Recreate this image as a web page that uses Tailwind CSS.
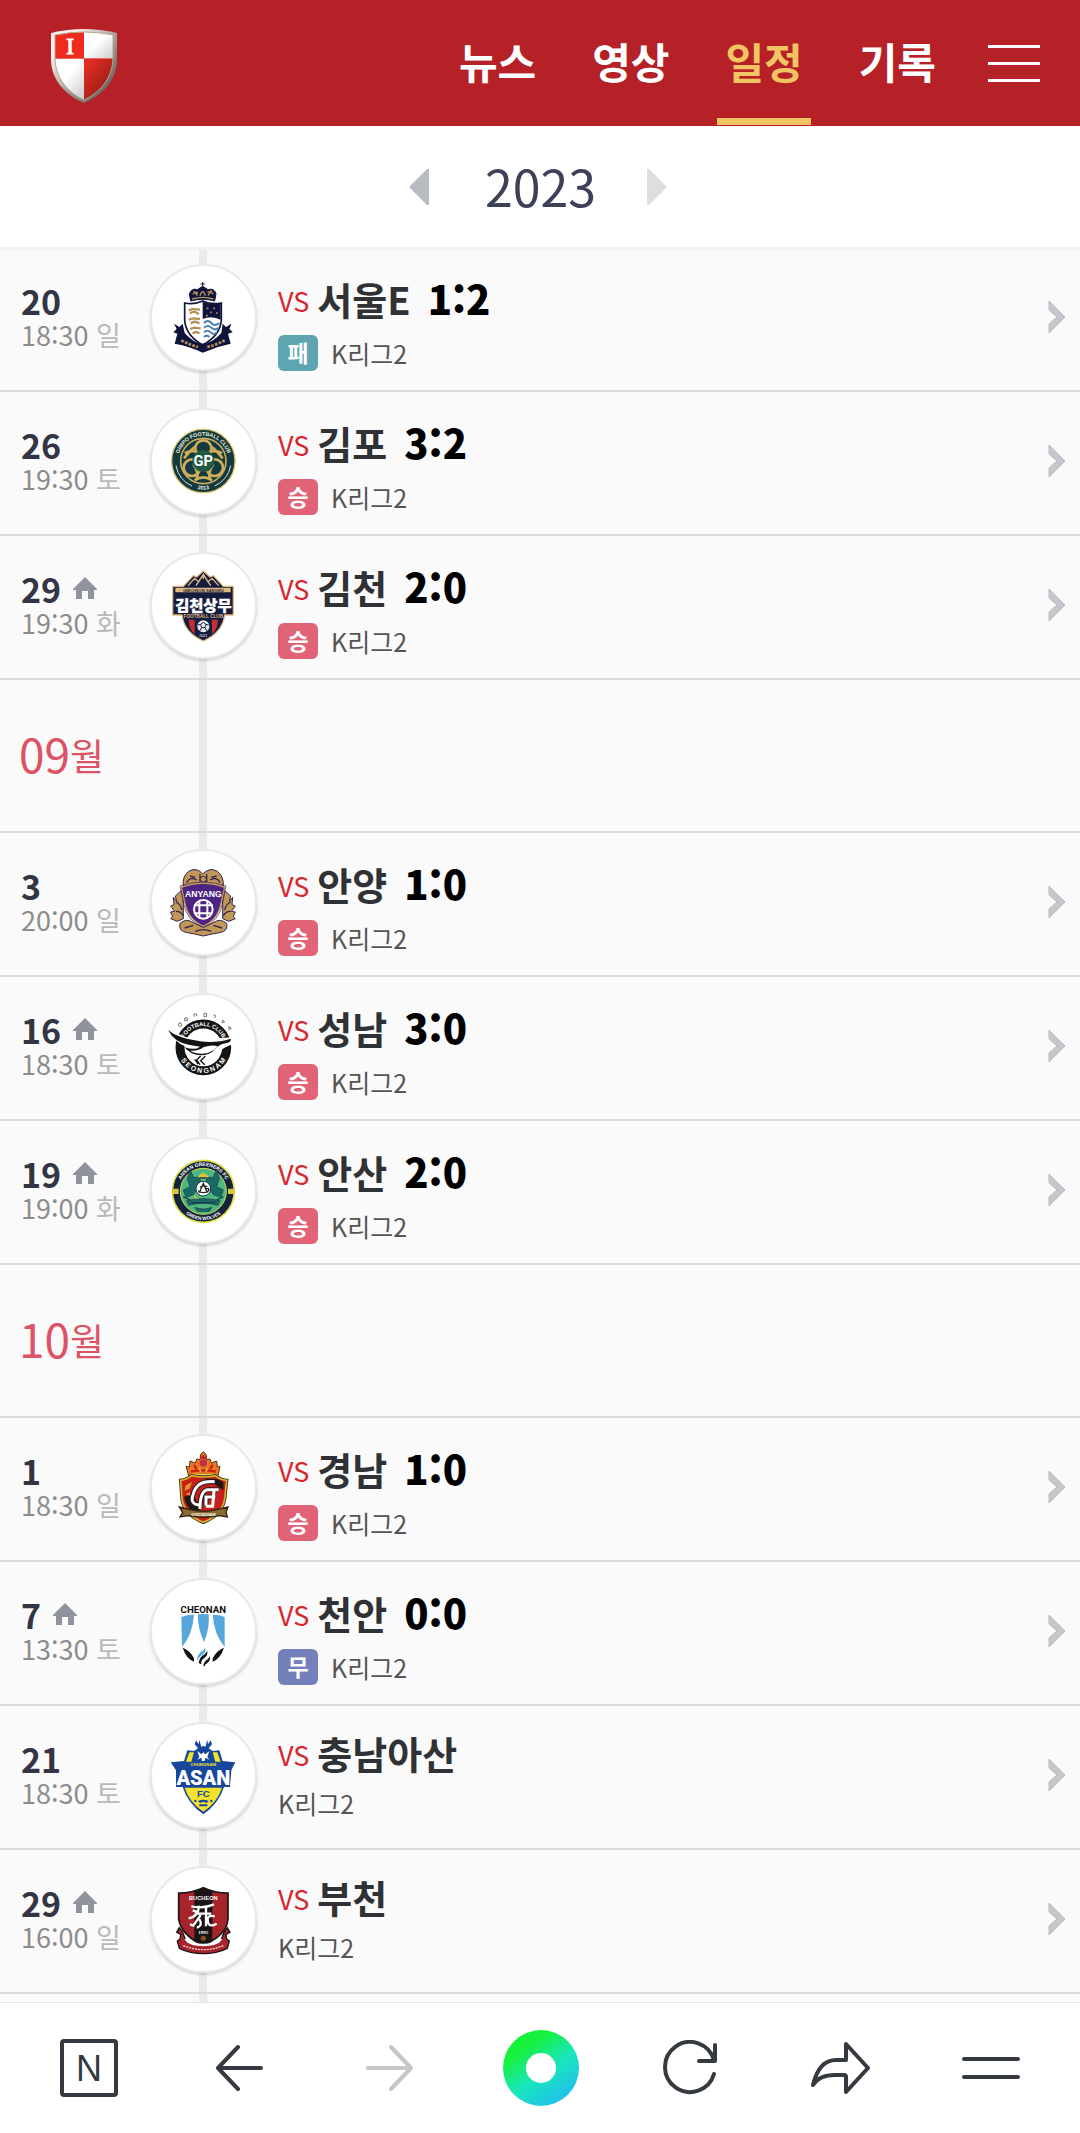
<!DOCTYPE html>
<html lang="ko">
<head>
    <meta charset="UTF-8">
    <meta name="viewport" content="width=device-width, initial-scale=1.0">
    <title>일정 - 2023</title>
    <script src="https://cdn.jsdelivr.net/npm/@tailwindcss/browser@4"></script>
</head>
<body class="bg-[#fafafa] font-['Noto_Sans_CJK_KR','Noto_Sans',sans-serif]">

    <!-- Shared icons -->
    <svg class="hidden">
        <symbol id="home" viewBox="0 0 24 22"><path fill="#8e939d" d="M12 0 24 12v1h-3v9h-6v-8H9v8H3v-9H0v-1z"/></symbol>
        <symbol id="chevron" viewBox="0 0 18 34"><path fill="#c6c7cc" stroke="#b9babf" stroke-width="1" d="M1 1 17 17 1 33V24L9 17 1 10z"/></symbol>
    </svg>

    <div class="flex min-h-screen flex-col">
        <header class="flex h-[126px] items-stretch bg-[#b52127] pr-10 pl-[51px]">
            <a href="#" class="mt-[29px]" aria-label="홈">
                <svg class="h-[74px] w-[66px]" viewBox="0 0 66 74">
                    <defs>
                        <linearGradient id="silver" x1="0" y1="0" x2="1" y2="1"><stop offset=".45" stop-color="#fff"/><stop offset="1" stop-color="#c4c5c7"/></linearGradient>
                        <linearGradient id="rim" x1="0" y1="0" x2="1" y2="1"><stop offset=".2" stop-color="#f7efee"/><stop offset=".6" stop-color="#98908c"/><stop offset="1" stop-color="#4f4746"/></linearGradient>
                        <linearGradient id="darkred" x1="0" y1="0" x2="1" y2="1"><stop offset=".1" stop-color="#e42c22"/><stop offset=".8" stop-color="#8d1b15"/></linearGradient>
                        <clipPath id="shield"><path d="M4 6Q33 0 62 6V28C62 50 48 64 33 71 18 64 4 50 4 28z"/></clipPath>
                    </defs>
                    <path fill="url(#rim)" d="M0 4Q33-4 66 4V30C66 52 50 67 33 74 16 67 0 52 0 30z"/>
                    <g clip-path="url(#shield)">
                        <path fill="#ef2b20" d="M0 0h33v29H0z"/>
                        <path fill="url(#silver)" d="M33 0h33v29H33z"/>
                        <path fill="url(#silver)" d="M0 30h33v44H0z"/>
                        <path fill="url(#darkred)" d="M33 30h33v44H33z"/>
                        <path stroke="#ef6a60" d="M0 29.500h66"/>
                    </g>
                    <path fill="none" stroke="#b8a98a" d="M4 6Q33 0 62 6V28C62 50 48 64 33 71 18 64 4 50 4 28z"/>
                    <text x="19" y="25" text-anchor="middle" font-family="Liberation Serif" font-size="23" fill="#fff" stroke="#fff">I</text>
                </svg>
            </a>
            <nav class="ml-auto flex gap-10 text-[42px] leading-[115px] font-bold text-white">
                <a href="#" class="px-2 pt-[3px]">뉴스</a>
                <a href="#" class="px-2 pt-[3px]">영상</a>
                <a href="#" class="mb-px border-b-[7px] border-[#f2c463] px-2 pt-[3px] text-[#f2c463]" aria-current="page">일정</a>
                <a href="#" class="px-2 pt-[3px]">기록</a>
            </nav>
            <button type="button" class="ml-11" aria-label="메뉴">
                <svg class="h-[37px] w-[52px]" viewBox="0 0 52 37"><path stroke="#fff" stroke-width="3" d="M0 1.500h52M0 18.500h52M0 35.500h52"/></svg>
            </button>
        </header>

        <!-- Year -->
        <div class="relative z-10 flex h-[124px] items-center justify-center gap-[51px] border-b-[3px] border-[#f2f2f2] bg-white pt-px pr-1">
            <button type="button" aria-label="이전 연도"><svg class="h-9 w-5" viewBox="0 0 20 36"><path fill="#b9bbc2" d="M20 0v36h-2L1 19q-1-1 0-2L18 0z"/></svg></button>
            <h1 class="pb-1 pl-[5px] text-[50px] leading-[60px] text-[#3c4158]">2023</h1>
            <button type="button" aria-label="다음 연도"><svg class="h-9 w-5" viewBox="0 0 20 36"><path fill="#dedede" d="M0 0v36h2l17-17q1-1 0-2L2 0z"/></svg></button>
        </div>

        <main class="relative -mt-0.5 grow">
            <div class="absolute inset-y-0 left-[199px] w-2 bg-[#ebebeb]"></div>
            <ul class="relative">
                <li>
                    <a href="#" class="flex h-36 items-center border-b-2 border-[#dbdbdb] pr-3.5 pb-1 pl-[21px]">
                        <div class="w-[129px]">
                            <p class="text-[34px] leading-[35px] font-bold text-[#333544]">20</p>
                            <p class="text-[27px] leading-[34px] text-[#8c8c8c]">18:30 <span class="text-[#b9b9b9]">일</span></p>
                        </div>
                        <div class="flex size-[107px] items-center justify-center rounded-full border-2 border-[#e9e9e9] bg-white shadow-[0_2px_3px_#00000026]">
                            <svg class="size-20" viewBox="-118 -120 240 240">
                                <path fill="#11143a" stroke="#11143a" stroke-width="3" d="M-2-105v14M-8-99H4M-38-48-42-70Q-34-88-18-82L-2-92 14-82Q32-88 38-70L34-48Q-2-58-38-48z"/>
                                <path fill="none" stroke="#b4925a" stroke-width="4" d="M-34-54Q-2-64 30-54M-32-68q8-10 14 4M-10-64q8-24 16 0M14-64q8-16 16-4M-30-76l14 4M12-74l14-4"/>
                                <path fill="#fff" stroke="#11143a" stroke-width="5" d="M-56-42Q-28-36-2-48 24-36 54-42V10Q50 56-2 84-52 56-56 10z"/>
                                <path fill="#11143a" d="M-2-46Q24-36 52-40V8Q24-6-2 6z"/>
                                <path fill="none" stroke="#b4925a" stroke-width="7" d="M-44-20l12-4 22 2M-40-10q12-12 26 2M-44 8l12-4 22 2M-38 20q12-12 26 0M-40 36l12-4 20 2M-32 50q10-10 20 0"/>
                                <path stroke="#b4925a" stroke-width="5" d="M10-26h5M30-26h5M20-14h5M38-12h5M8-4h5"/>
                                <path fill="none" stroke="#4f7fb4" stroke-width="6" d="M2 18q12-12 22 0t24 0M2 32q12-10 22 0t22 0M2 46q10-10 20 0t18 0M2 60q8-8 16 0"/>
                                <path fill="#11143a" d="M-88 20l16 10 10-10 6 28Q-30 78-2 80 28 78 54 48L58 20 68 30 84 20 78 36 88 46 74 50 82 80Q40 88-2 107-40 88-86 80L-78 50-90 46-80 36z"/>
                                <path fill="none" stroke="#b4925a" stroke-width="8" stroke-dasharray="8 4" d="M-66 70Q-40 84-16 90M12 90Q38 84 64 70"/>
                            </svg>
                        </div>
                        <div class="ml-[21px] self-start pt-[27px]">
                            <h3 class="text-[38px] leading-12 font-bold text-[#2f3134]"><span class="mr-2 align-[3px] text-[27px] leading-none font-normal text-[#d7262d]">VS</span>서울E<b class="ml-[17px] text-[40px] leading-none text-black">1:2</b></h3>
                            <p class="mt-3 flex items-center gap-[13px] text-[25px] leading-9 text-[#555]"><span class="h-9 w-10 rounded-md bg-[#5ea5b2] text-center text-[23px] leading-[34px] font-bold text-white">패</span>K리그2</p>
                        </div>
                        <svg class="ml-auto h-[34px] w-[18px]"><use href="#chevron"/></svg>
                    </a>
                </li>
                <li>
                    <a href="#" class="flex h-36 items-center border-b-2 border-[#dbdbdb] pr-3.5 pb-1 pl-[21px]">
                        <div class="w-[129px]">
                            <p class="text-[34px] leading-[35px] font-bold text-[#333544]">26</p>
                            <p class="text-[27px] leading-[34px] text-[#8c8c8c]">19:30 <span class="text-[#b9b9b9]">토</span></p>
                        </div>
                        <div class="flex size-[107px] items-center justify-center rounded-full border-2 border-[#e9e9e9] bg-white shadow-[0_2px_3px_#00000026]">
                            <svg class="size-20" viewBox="-118 -120 240 240">
                                <defs>
                                    <path id="ringTop" d="M-76 0A76 76 0 0 1 76 0"/>
                                    <path id="ringBottom" d="M-86 0A86 86 0 0 0 86 0"/>
                                </defs>
                                <circle r="95" fill="#123a40" stroke="#d8bd63" stroke-width="4"/>
                                <text font-family="Liberation Sans" font-weight="700" font-size="16" fill="#f3efdc" text-anchor="middle"><textPath href="#ringTop" startOffset="50%">GIMPO FOOTBALL CLUB</textPath></text>
                                <text font-family="Liberation Sans" font-weight="700" font-size="16" fill="#f3efdc" text-anchor="middle"><textPath href="#ringBottom" startOffset="50%">2013</textPath></text>
                                <path fill="none" stroke="#d9dfd8" stroke-width="3" d="M-82 14A84 84 0 0 0-34 75M82 14A84 84 0 0 1 34 75"/>
                                <circle r="68" fill="#123a40" stroke="#d0ad58" stroke-width="5"/>
                                <g fill="none" stroke="#d0ad58" stroke-width="8">
                                    <circle cy="-38" r="24"/><circle cx="-34" cy="20" r="25"/><circle cx="34" cy="20" r="25"/>
                                    <path d="M-56-24Q-20-40 0-12M56-24Q20-40 0-12M-22 56Q-10 40-30 10M22 56Q10 40 30 10M-58-8Q-40-30-26-42M58-8Q40-30 26-42M-26 58Q0 40 26 58"/>
                                </g>
                                <circle r="33" fill="#1f5b42"/>
                                <text y="15" text-anchor="middle" font-family="Roboto" font-weight="700" font-size="44" fill="#fff">GP</text>
                            </svg>
                        </div>
                        <div class="ml-[21px] self-start pt-[27px]">
                            <h3 class="text-[38px] leading-12 font-bold text-[#2f3134]"><span class="mr-2 align-[3px] text-[27px] leading-none font-normal text-[#d7262d]">VS</span>김포<b class="ml-[17px] text-[40px] leading-none text-black">3:2</b></h3>
                            <p class="mt-3 flex items-center gap-[13px] text-[25px] leading-9 text-[#555]"><span class="h-9 w-10 rounded-md bg-[#e06378] text-center text-[23px] leading-[34px] font-bold text-white">승</span>K리그2</p>
                        </div>
                        <svg class="ml-auto h-[34px] w-[18px]"><use href="#chevron"/></svg>
                    </a>
                </li>
                <li>
                    <a href="#" class="flex h-36 items-center border-b-2 border-[#dbdbdb] pr-3.5 pb-1 pl-[21px]">
                        <div class="w-[129px]">
                            <p class="flex items-center gap-3 text-[34px] leading-[35px] font-bold text-[#333544]">29 <svg class="h-[22px] w-6"><use href="#home"/></svg></p>
                            <p class="text-[27px] leading-[34px] text-[#8c8c8c]">19:30 <span class="text-[#b9b9b9]">화</span></p>
                        </div>
                        <div class="flex size-[107px] items-center justify-center rounded-full border-2 border-[#e9e9e9] bg-white shadow-[0_2px_3px_#00000026]">
                            <svg class="size-20" viewBox="-118 -120 240 240">
                                <path fill="#141d3f" stroke="#e0b981" stroke-width="4" stroke-linejoin="round" d="M-92-56H-60L-30-88-20-84 0-102 20-84 30-88 60-56H90V30H64Q58 82 0 108-58 82-64 30H-92z"/>
                                <path fill="none" stroke="#e0b981" stroke-width="4" d="M-46-58-26-80-14-70 0-92 14-70 26-80 46-58M-14-70-22-58M14-70 22-58M0-92V-78"/>
                                <path fill="#e0b981" d="M-84-52H82v14H-84z"/>
                                <text y="-40" text-anchor="middle" font-family="Liberation Sans" font-weight="700" font-size="12" fill="#141d3f">GIMCHEON SANGMU</text>
                                <text y="17" text-anchor="middle" font-family="Noto Sans CJK KR" font-weight="900" font-size="46" fill="#fff" stroke="#fff">김천상무</text>
                                <text y="39" text-anchor="middle" font-family="Liberation Sans" font-weight="700" font-size="14" fill="#e0b981">FOOTBALL CLUB</text>
                                <path fill="#c5302f" d="M-44 44h18v42Q-42 76-44 44zM44 44H26v42Q42 76 44 44z"/>
                                <circle cy="64" r="18" fill="#e8ebef"/>
                                <path fill="none" stroke="#141d3f" stroke-width="3" d="M-8 58 0 52l8 6-3 10H-5zM-16 60l8-2M16 60l-8-2M-5 68l-6 10M5 68l6 10"/>
                                <text y="96" text-anchor="middle" font-family="Liberation Sans" font-size="11" fill="#fff">2021</text>
                            </svg>
                        </div>
                        <div class="ml-[21px] self-start pt-[27px]">
                            <h3 class="text-[38px] leading-12 font-bold text-[#2f3134]"><span class="mr-2 align-[3px] text-[27px] leading-none font-normal text-[#d7262d]">VS</span>김천<b class="ml-[17px] text-[40px] leading-none text-black">2:0</b></h3>
                            <p class="mt-3 flex items-center gap-[13px] text-[25px] leading-9 text-[#555]"><span class="h-9 w-10 rounded-md bg-[#e06378] text-center text-[23px] leading-[34px] font-bold text-white">승</span>K리그2</p>
                        </div>
                        <svg class="ml-auto h-[34px] w-[18px]"><use href="#chevron"/></svg>
                    </a>
                </li>

                <li class="flex h-[153px] items-center border-b-2 border-[#dbdbdb] pb-1.5 pl-[19px]">
                    <h2 class="text-[46px] leading-[60px] text-[#dc5365]">09<span class="align-[2px] text-[37px] leading-none">월</span></h2>
                </li>
                <li>
                    <a href="#" class="flex h-36 items-center border-b-2 border-[#dbdbdb] pr-3.5 pb-1 pl-[21px]">
                        <div class="w-[129px]">
                            <p class="text-[34px] leading-[35px] font-bold text-[#333544]">3</p>
                            <p class="text-[27px] leading-[34px] text-[#8c8c8c]">20:00 <span class="text-[#b9b9b9]">일</span></p>
                        </div>
                        <div class="flex size-[107px] items-center justify-center rounded-full border-2 border-[#e9e9e9] bg-white shadow-[0_2px_3px_#00000026]">
                            <svg class="size-20" viewBox="-118 -120 240 240">
                                <g fill="#c1975a" stroke="#33264d" stroke-width="3" stroke-linejoin="round">
                                    <path d="M-60-48Q-64-76-44-92-20-106-2-84 20-106 42-92 62-76 60-48L0-40z"/>
                                    <path d="M-66-34-84-18-80-2-90-14-88 8-98 12-86 28-98 30-92 44-98 50-78 58-60 50V-10zM64-34 82-18 78-2 88-14 86 8 96 12 84 28 96 30 90 44 96 50 76 58 58 50V-10z"/>
                                    <path d="M-70 64Q-50 48-34 60L0 76 34 60Q50 48 70 64 76 88 48 92L26 96 0 102-26 96-48 92Q-76 88-70 64z"/>
                                </g>
                                <path fill="none" stroke="#33264d" stroke-width="4" d="M-50-58q10-20 30-8M50-58q-10-20-30-8M-40-78l16 4M40-78l-16 4M-10-84V-60M10-84V-60M-82 0q14 6 18 24M-82 28q16 0 22 14M82 0q-14 6-18 24M82 28q-16 0-22 14M-56 78l26-8M-24 88q24-10 48 0M56 78 30 70"/>
                                <circle cy="-68" r="9" fill="#c1975a" stroke="#33264d" stroke-width="3"/>
                                <path fill="#4d2384" stroke="#c1975a" stroke-width="4" d="M-66-44Q0-68 64-44L54 0Q44 54 0 72-46 54-56 0z"/>
                                <path fill="none" stroke="#33264d" stroke-width="2" d="M-70-48Q0-72 68-48L58 2Q48 58 0 76-50 58-60 2z"/>
                                <text y="-16" text-anchor="middle" font-family="Liberation Sans" font-weight="700" font-size="26" fill="#fff">ANYANG</text>
                                <g fill="none" stroke="#fff" stroke-width="6"><circle cy="22" r="28"/><path d="M-12 10H12V34H-12zM-12-4V10M12-4V10M-12 34V48M12 34V48M-28 10H-12M28 10H12M-28 34H-12M28 34H12"/></g>
                            </svg>
                        </div>
                        <div class="ml-[21px] self-start pt-[27px]">
                            <h3 class="text-[38px] leading-12 font-bold text-[#2f3134]"><span class="mr-2 align-[3px] text-[27px] leading-none font-normal text-[#d7262d]">VS</span>안양<b class="ml-[17px] text-[40px] leading-none text-black">1:0</b></h3>
                            <p class="mt-3 flex items-center gap-[13px] text-[25px] leading-9 text-[#555]"><span class="h-9 w-10 rounded-md bg-[#e06378] text-center text-[23px] leading-[34px] font-bold text-white">승</span>K리그2</p>
                        </div>
                        <svg class="ml-auto h-[34px] w-[18px]"><use href="#chevron"/></svg>
                    </a>
                </li>
                <li>
                    <a href="#" class="flex h-36 items-center border-b-2 border-[#dbdbdb] pr-3.5 pb-1 pl-[21px]">
                        <div class="w-[129px]">
                            <p class="flex items-center gap-3 text-[34px] leading-[35px] font-bold text-[#333544]">16 <svg class="h-[22px] w-6"><use href="#home"/></svg></p>
                            <p class="text-[27px] leading-[34px] text-[#8c8c8c]">18:30 <span class="text-[#b9b9b9]">토</span></p>
                        </div>
                        <div class="flex size-[107px] items-center justify-center rounded-full border-2 border-[#e9e9e9] bg-white shadow-[0_2px_3px_#00000026]">
                            <svg class="size-20" viewBox="-118 -120 240 240">
                                <defs>
                                    <path id="snTop" d="M-64 4A64 64 0 0 1 64 4"/>
                                    <path id="snBottom" d="M-77 4A77 77 0 0 0 77 4"/>
                                </defs>
                                <g fill="none" stroke="#777" stroke-width="3"><path d="M-76-66l8-4 4 8-8 4zM-56-84h8v8h-8zM-28-88v-8h8v6M2-98h8v10H2zM30-94l8 4-6 6M58-78l6 6-8 2zM76-58l8 4-6 6z"/></g>
                                <circle cy="4" r="70" fill="none" stroke="#141414" stroke-width="27"/>
                                <text font-family="Liberation Sans" font-weight="700" font-size="17" fill="#fff" text-anchor="middle"><textPath href="#snTop" startOffset="50%">FOOTBALL CLUB</textPath></text>
                                <text font-family="Liberation Sans" font-weight="700" font-size="21" fill="#fff" text-anchor="middle"><textPath href="#snBottom" startOffset="50%">S E O N G N A M</textPath></text>
                                <path fill="#fff" d="M-104-50Q-84-38-60-30L-28-18 84-26V-4Q60 4 50 16L-56 0Q-86-10-104-50z"/>
                                <path fill="#141414" d="M-106-48Q-84-30-50-22L-10-14Q40-8 82-22 86-12 66-8 46-4 34 10 22 28-10 28-40 26-56 4-24 14-10 2L-44-4Q-86-10-106-48z"/>
                                <path fill="#fff" d="M0 4Q22-4 42 0 32 16 10 22-20 26-40 14-14 16 0 4z"/>
                                <path fill="none" stroke="#141414" stroke-width="4" d="M-8 30-20 42-10 56M6 30-8 44 4 56M-26 40l10 14"/>
                            </svg>
                        </div>
                        <div class="ml-[21px] self-start pt-[27px]">
                            <h3 class="text-[38px] leading-12 font-bold text-[#2f3134]"><span class="mr-2 align-[3px] text-[27px] leading-none font-normal text-[#d7262d]">VS</span>성남<b class="ml-[17px] text-[40px] leading-none text-black">3:0</b></h3>
                            <p class="mt-3 flex items-center gap-[13px] text-[25px] leading-9 text-[#555]"><span class="h-9 w-10 rounded-md bg-[#e06378] text-center text-[23px] leading-[34px] font-bold text-white">승</span>K리그2</p>
                        </div>
                        <svg class="ml-auto h-[34px] w-[18px]"><use href="#chevron"/></svg>
                    </a>
                </li>
                <li>
                    <a href="#" class="flex h-36 items-center border-b-2 border-[#dbdbdb] pr-3.5 pb-1 pl-[21px]">
                        <div class="w-[129px]">
                            <p class="flex items-center gap-3 text-[34px] leading-[35px] font-bold text-[#333544]">19 <svg class="h-[22px] w-6"><use href="#home"/></svg></p>
                            <p class="text-[27px] leading-[34px] text-[#8c8c8c]">19:00 <span class="text-[#b9b9b9]">화</span></p>
                        </div>
                        <div class="flex size-[107px] items-center justify-center rounded-full border-2 border-[#e9e9e9] bg-white shadow-[0_2px_3px_#00000026]">
                            <svg class="size-20" viewBox="-118 -120 240 240">
                                <circle cy="4" r="93" fill="#13223d" stroke="#dfe04a" stroke-width="5"/>
                                <g transform="translate(0 4)">
                                    <text font-family="Liberation Sans" font-weight="700" font-size="15" fill="#fff" text-anchor="middle"><textPath href="#ringTop" startOffset="50%">ANSAN GREENERS FC</textPath></text>
                                    <text font-family="Liberation Sans" font-weight="700" font-size="14" fill="#fff" text-anchor="middle"><textPath href="#ringBottom" startOffset="50%">GREEN WOLVES</textPath></text>
                                </g>
                                <circle cy="4" r="69" fill="#4fb780" stroke="#d6dc4b" stroke-width="3"/>
                                <path fill="#d8c43d" d="M-94-4h20v16h-20zM74-4h20v16H74zM-16-40Q0-62 16-40L12-32h-24zM-44-34l8-10 6 12zM-30 14l20 16-10 8zM30-30l12-6-2 12z"/>
                                <path fill="#1b6a63" stroke="#173a4c" stroke-width="2" d="M-40-62-28-36Q-14-44-8-28L-20 0-30 14-52 22-60 0-40-10-48-34zM40-62 28-36Q14-44 8-28L20 0 30 14 52 22 60 0 40-10 48-34zM-50 32Q0 20 50 32L44 46Q0 34-44 46zM-26 52Q0 62 26 52L18 64H-18z"/>
                                <path fill="none" stroke="#173a4c" stroke-width="4" d="M-60 20l20 10M60 20 40 30M-12-36h24M-36 38h72"/>
                                <circle cy="-4" r="22" fill="#fff" stroke="#173a4c" stroke-width="3"/>
                                <path fill="none" stroke="#222" stroke-width="4" d="M-12 8 0-20 12 8M-10-8Q0-16 12-10M-16 2Q0 14 16 2V-4H4"/>
                            </svg>
                        </div>
                        <div class="ml-[21px] self-start pt-[27px]">
                            <h3 class="text-[38px] leading-12 font-bold text-[#2f3134]"><span class="mr-2 align-[3px] text-[27px] leading-none font-normal text-[#d7262d]">VS</span>안산<b class="ml-[17px] text-[40px] leading-none text-black">2:0</b></h3>
                            <p class="mt-3 flex items-center gap-[13px] text-[25px] leading-9 text-[#555]"><span class="h-9 w-10 rounded-md bg-[#e06378] text-center text-[23px] leading-[34px] font-bold text-white">승</span>K리그2</p>
                        </div>
                        <svg class="ml-auto h-[34px] w-[18px]"><use href="#chevron"/></svg>
                    </a>
                </li>

                <li class="flex h-[153px] items-center border-b-2 border-[#dbdbdb] pb-1.5 pl-[19px]">
                    <h2 class="text-[46px] leading-[60px] text-[#dc5365]">10<span class="align-[2px] text-[37px] leading-none">월</span></h2>
                </li>
                <li>
                    <a href="#" class="flex h-36 items-center border-b-2 border-[#dbdbdb] pr-3.5 pb-1 pl-[21px]">
                        <div class="w-[129px]">
                            <p class="text-[34px] leading-[35px] font-bold text-[#333544]">1</p>
                            <p class="text-[27px] leading-[34px] text-[#8c8c8c]">18:30 <span class="text-[#b9b9b9]">일</span></p>
                        </div>
                        <div class="flex size-[107px] items-center justify-center rounded-full border-2 border-[#e9e9e9] bg-white shadow-[0_2px_3px_#00000026]">
                            <svg class="size-20" viewBox="-118 -120 240 240">
                                <path fill="#e8781f" stroke="#5b3414" stroke-width="3" stroke-linejoin="round" d="M-44-34-52-62-42-60-40-78-24-72-20-84-10-82-8-98 0-106 8-98 10-82 20-84 24-72 40-78 42-60 50-62 44-34Q0-44-44-34z"/>
                                <path fill="none" stroke="#cb2017" stroke-width="7" d="M-38-46Q0-54 38-46M-28-66l8 12M28-66l-8 12M0-96v12M-10-88H10"/>
                                <circle cy="-72" r="11" fill="#c22d4e"/>
                                <path stroke="#f3d34a" stroke-width="4" d="M-40-38H40M-12-56l4 10M12-56l-4 10"/>
                                <path fill="#c7201a" stroke="#3c2a16" stroke-width="10" d="M-68-20Q-48-22-36-34 0-26 36-34 48-22 70-20L64 36Q56 84 0 106-56 84-64 36z"/>
                                <path fill="#c7201a" stroke="#d8b22f" stroke-width="5" d="M-68-20Q-48-22-36-34 0-26 36-34 48-22 70-20L64 36Q56 84 0 106-56 84-64 36z"/>
                                <path fill="#1d1718" d="M0-26Q24-24 42-24L60-14V10L34-8zM-58 30-30 20-10 70-30 76Q-54 54-58 30z"/>
                                <path fill="#e0922b" d="M-54-4l20-12-6 20-16 8zM-54 20l14-4v10z"/>
                                <path fill="none" stroke="#231a1a" stroke-width="15" d="M34-16Q-20-20-30 20-42 52-12 54M46 8H12Q-10 12-10 66M36 30H8V56"/>
                                <path fill="none" stroke="#fff" stroke-width="9" d="M34-16Q-20-20-30 20-42 52-12 54M46 8H12Q-10 12-10 66M36 30H8V56M32 10 28 58H8"/>
                                <path fill="#8c6b32" stroke="#2f2414" stroke-width="4" d="M-72 60-40 68Q0 78 40 68L74 60 68 76 72 90 46 86Q0 96-44 86L-70 90-62 76z"/>
                                <text y="86" text-anchor="middle" font-family="Liberation Sans" font-weight="700" font-size="11" fill="#fff">GYEONGNAM</text>
                            </svg>
                        </div>
                        <div class="ml-[21px] self-start pt-[27px]">
                            <h3 class="text-[38px] leading-12 font-bold text-[#2f3134]"><span class="mr-2 align-[3px] text-[27px] leading-none font-normal text-[#d7262d]">VS</span>경남<b class="ml-[17px] text-[40px] leading-none text-black">1:0</b></h3>
                            <p class="mt-3 flex items-center gap-[13px] text-[25px] leading-9 text-[#555]"><span class="h-9 w-10 rounded-md bg-[#e06378] text-center text-[23px] leading-[34px] font-bold text-white">승</span>K리그2</p>
                        </div>
                        <svg class="ml-auto h-[34px] w-[18px]"><use href="#chevron"/></svg>
                    </a>
                </li>
                <li>
                    <a href="#" class="flex h-36 items-center border-b-2 border-[#dbdbdb] pr-3.5 pb-1 pl-[21px]">
                        <div class="w-[129px]">
                            <p class="flex items-center gap-3 text-[34px] leading-[35px] font-bold text-[#333544]">7 <svg class="h-[22px] w-6"><use href="#home"/></svg></p>
                            <p class="text-[27px] leading-[34px] text-[#8c8c8c]">13:30 <span class="text-[#b9b9b9]">토</span></p>
                        </div>
                        <div class="flex size-[107px] items-center justify-center rounded-full border-2 border-[#e9e9e9] bg-white shadow-[0_2px_3px_#00000026]">
                            <svg class="size-20" viewBox="-118 -120 240 240">
                                <text y="-55" text-anchor="middle" font-family="Roboto" font-weight="700" font-size="29" fill="#111">CHEONAN</text>
                                <path fill="#56a8dc" d="M-66-42Q-46-50-28-49-32 10-64 48zM-16-50Q0-52 16-50 20-10 2 34-18-10-16-50zM28-49Q46-50 64-42V48Q32 10 28-49z"/>
                                <path fill="#56a8dc" d="M-18 92Q-22 70 0 58L6 50Q8 64-4 72-16 80-18 92z"/>
                                <path fill="#111" d="M-62 50Q-40 58-28 82V92Q-52 82-62 50zM62 50Q40 58 28 82V92Q52 82 62 50zM-14 96Q-12 78 4 70L12 60Q14 74 2 82-8 88-6 100zM0 104Q2 90 14 84L20 76Q22 90 12 96 4 100 4 106z"/>
                            </svg>
                        </div>
                        <div class="ml-[21px] self-start pt-[27px]">
                            <h3 class="text-[38px] leading-12 font-bold text-[#2f3134]"><span class="mr-2 align-[3px] text-[27px] leading-none font-normal text-[#d7262d]">VS</span>천안<b class="ml-[17px] text-[40px] leading-none text-black">0:0</b></h3>
                            <p class="mt-3 flex items-center gap-[13px] text-[25px] leading-9 text-[#555]"><span class="h-9 w-10 rounded-md bg-[#7480bb] text-center text-[23px] leading-[34px] font-bold text-white">무</span>K리그2</p>
                        </div>
                        <svg class="ml-auto h-[34px] w-[18px]"><use href="#chevron"/></svg>
                    </a>
                </li>
                <li>
                    <a href="#" class="flex h-36 items-center border-b-2 border-[#dbdbdb] pr-3.5 pb-1 pl-[21px]">
                        <div class="w-[129px]">
                            <p class="text-[34px] leading-[35px] font-bold text-[#333544]">21</p>
                            <p class="text-[27px] leading-[34px] text-[#8c8c8c]">18:30 <span class="text-[#b9b9b9]">토</span></p>
                        </div>
                        <div class="flex size-[107px] items-center justify-center rounded-full border-2 border-[#e9e9e9] bg-white shadow-[0_2px_3px_#00000026]">
                            <svg class="size-20" viewBox="-118 -120 240 240">
                                <path fill="#17479d" d="M-98-38-58-42-48-74-28-72-16-80-26-92-22-104-14-92-12-106-6-84 0-88 6-84 12-106 14-92 22-104 26-92 16-80 28-72 48-74 58-42 96-38 84-14 80 36H62Q46 86 0 118-46 86-62 36H-82V-14z"/>
                                <path fill="#f2e22b" d="M-42-68h14l-8 28h-16zM42-68H28l8 28h16zM-56 38H56Q42 82 0 110-42 82-56 38z"/>
                                <path fill="#fff" d="M-18-72-6-62 0-68 6-62 18-72 12-54 18-46 6-52 4-42H-4l-2-10-12 6 6-8z"/>
                                <text y="-26" text-anchor="middle" font-family="Liberation Sans" font-weight="700" font-size="13" fill="#f2e22b">CHUNGNAM</text>
                                <text y="31" text-anchor="middle" font-family="Roboto" font-weight="900" font-size="60" fill="#fff">ASAN</text>
                                <text y="66" text-anchor="middle" font-family="Liberation Sans" font-weight="700" font-size="29" fill="#17479d">FC</text>
                                <path fill="#17479d" d="M-28 76l6-2 2 6-6 2zM20 76l6-2 2 6-6 2zM-16 78Q0 70 16 78L10 84Q0 78-10 84zM-12 88H12V94H-12z"/>
                            </svg>
                        </div>
                        <div class="ml-[21px] self-start pt-[23px]">
                            <h3 class="text-[38px] leading-12 font-bold text-[#2f3134]"><span class="mr-2 align-[3px] text-[27px] leading-none font-normal text-[#d7262d]">VS</span>충남아산</h3>
                            <p class="mt-2 text-[25px] leading-9 text-[#555]">K리그2</p>
                        </div>
                        <svg class="ml-auto h-[34px] w-[18px]"><use href="#chevron"/></svg>
                    </a>
                </li>
                <li>
                    <a href="#" class="flex h-36 items-center border-b-2 border-[#dbdbdb] pr-3.5 pb-1 pl-[21px]">
                        <div class="w-[129px]">
                            <p class="flex items-center gap-3 text-[34px] leading-[35px] font-bold text-[#333544]">29 <svg class="h-[22px] w-6"><use href="#home"/></svg></p>
                            <p class="text-[27px] leading-[34px] text-[#8c8c8c]">16:00 <span class="text-[#b9b9b9]">일</span></p>
                        </div>
                        <div class="flex size-[107px] items-center justify-center rounded-full border-2 border-[#e9e9e9] bg-white shadow-[0_2px_3px_#00000026]">
                            <svg class="size-20" viewBox="-118 -120 240 240">
                                <path fill="#a8242b" stroke="#191516" stroke-width="5" d="M-74-78Q-34-78 0-94 34-78 74-78V0Q70 50 0 78-66 50-74 0z"/>
                                <path fill="#191516" d="M-27-84Q-14-88 0-94 14-88 27-84V68L0 78-27 68z"/>
                                <text y="-57" text-anchor="middle" font-family="Liberation Sans" font-weight="700" font-size="17" fill="#fff">BUCHEON</text>
                                <path fill="none" stroke="#fff" stroke-width="7" d="M-36-38Q0-30 32-44M-14-40Q-12-8-44-2M-26-16H24M8-38V22M-8-12-30 20-40 16M-12 0Q0 20-20 26M34-8Q8-14 14 10 18 26 40 14M-32-26-20-22"/>
                                <text y="45" text-anchor="middle" font-family="Liberation Serif" font-weight="700" font-size="15" fill="#fff">1995</text>
                                <path fill="#a8242b" stroke="#191516" stroke-width="4" d="M-72 26-80 40-68 46-70 60-78 66-72 88Q-40 104 0 104 40 104 72 88L78 66 70 60 68 46 80 40 72 26 62 40 52 66Q0 92-52 66L-62 40z"/>
                                <path fill="none" stroke="#fff" stroke-width="7" d="M-54 60Q-40 78 0 78 40 78 54 60"/>
                                <path fill="none" stroke="#f1d9d9" stroke-width="4" stroke-dasharray="6 3" d="M-60 80Q0 104 60 80"/>
                                <circle cy="58" r="8" fill="#8a4b1c"/>
                            </svg>
                        </div>
                        <div class="ml-[21px] self-start pt-[23px]">
                            <h3 class="text-[38px] leading-12 font-bold text-[#2f3134]"><span class="mr-2 align-[3px] text-[27px] leading-none font-normal text-[#d7262d]">VS</span>부천</h3>
                            <p class="mt-2 text-[25px] leading-9 text-[#555]">K리그2</p>
                        </div>
                        <svg class="ml-auto h-[34px] w-[18px]"><use href="#chevron"/></svg>
                    </a>
                </li>
            </ul>
        </main>

        <!-- Browser toolbar -->
        <nav class="sticky bottom-0 z-20 grid h-[131px] grid-cols-7 items-center justify-items-center border-t border-[#e4e5e7] bg-white px-3.5 text-[#353a40]">
            <button type="button" aria-label="네이버 홈"><svg class="size-[58px]" viewBox="0 0 58 58"><rect x="2" y="2" width="54" height="54" rx="2" fill="none" stroke="currentColor" stroke-width="4"/><text x="29" y="42" text-anchor="middle" font-family="Liberation Sans" font-size="36" fill="currentColor">N</text></svg></button>
            <button type="button" aria-label="뒤로"><svg class="size-12" viewBox="0 0 48 48" fill="none" stroke="currentColor" stroke-width="4" stroke-linecap="round" stroke-linejoin="round"><path d="M46 24H3M23 3 3 24 23 45"/></svg></button>
            <button type="button" class="text-[#c5c6c8]" aria-label="앞으로"><svg class="size-12" viewBox="0 0 48 48" fill="none" stroke="currentColor" stroke-width="4" stroke-linecap="round" stroke-linejoin="round"><path d="M2 24H45M25 3 45 24 25 45"/></svg></button>
            <button type="button" aria-label="그린닷">
                <svg class="size-[78px]" viewBox="0 0 78 78">
                    <defs><linearGradient id="dot" x1=".2" y1=".1" x2=".8" y2=".95"><stop offset=".15" stop-color="#17f13c"/><stop offset=".55" stop-color="#19e6bd"/><stop offset="1" stop-color="#22bdf0"/></linearGradient></defs>
                    <circle cx="40" cy="39" r="38" fill="url(#dot)"/><circle cx="40" cy="39" r="15" fill="#fff"/>
                </svg>
            </button>
            <button type="button" aria-label="새로고침"><svg class="size-14" viewBox="0 0 56 56" fill="none" stroke="currentColor" stroke-width="4" stroke-linecap="round" stroke-linejoin="round"><path d="M52 34A25 25 0 1 1 52 20M37 21H53V5"/></svg></button>
            <button type="button" aria-label="공유"><svg class="h-[54px] w-[60px]" viewBox="0 0 60 54" fill="none" stroke="currentColor" stroke-width="4" stroke-linecap="round" stroke-linejoin="round"><path d="M2 44Q8 19 25 19H35V3L57 27 35 51V36Q35 34 33 34H24Q8 34 2 44z"/></svg></button>
            <button type="button" aria-label="전체 메뉴"><svg class="h-[22px] w-[58px]" viewBox="0 0 58 22" fill="none" stroke="currentColor" stroke-width="4" stroke-linecap="round"><path d="M2 2H56M2 20H56"/></svg></button>
        </nav>
    </div>
</body>
</html>
